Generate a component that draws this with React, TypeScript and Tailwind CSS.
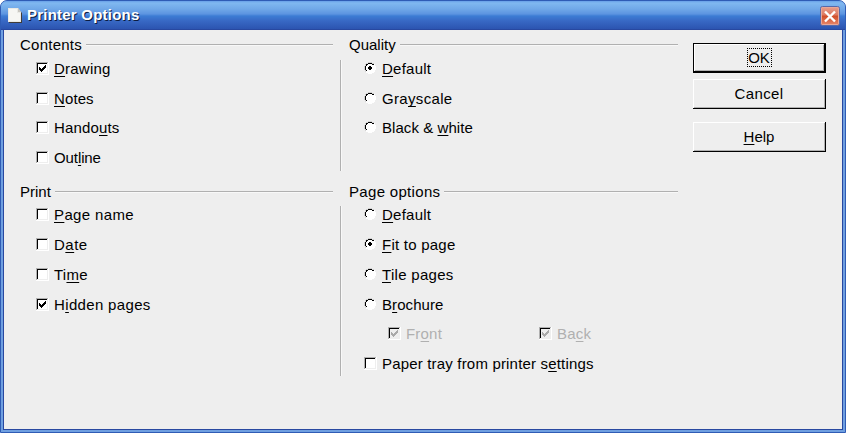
import React from "react";

/** Renders a label; the character following "~" is the underlined mnemonic. */
function Mnemonic({ text }: { text: string }) {
  const i = text.indexOf("~");
  if (i < 0) return <>{text}</>;
  return (
    <>
      {text.slice(0, i)}
      <span className="underline decoration-1 underline-offset-2 [text-decoration-skip-ink:none]">{text[i + 1]}</span>
      {text.slice(i + 2)}
    </>
  );
}

function CheckMark({ checked, disabled }: { checked?: boolean; disabled?: boolean }) {
  return (
    <svg width="13" height="13" viewBox="0 0 13 13" shapeRendering="crispEdges" className="block shrink-0">
      <rect width="13" height="13" fill="#fff" />
      <path d="M0 0H12V1H1V12H0Z" fill="#b0b0b0" />
      <path d="M1 1H11V2H2V11H1Z" fill="#000" />
      <path d="M11 1h1v11H1v-1h10z" fill="#eeeeee" />
      <rect x="2" y="2" width="9" height="9" fill={disabled ? "#eeeeee" : "#fff"} />
      {checked && (
        <path
          d="M3 5h1v1h1v1h1v-1h1v-1h1v-1h1v-1h1v3h-1v1h-1v1h-1v1h-1v1h-1v-1h-1v-1h-1z"
          fill={disabled ? "#a9a9a9" : "#000"}
        />
      )}
    </svg>
  );
}

function RadioMark({ checked }: { checked?: boolean }) {
  return (
    <svg width="12" height="12" viewBox="0 0 12 12" shapeRendering="crispEdges" className="block shrink-0">
      <path d="M4 1h4v1h2v2h1v4h-1v2h-2v1H4v-1H2V8H1V4h1V2h2z" fill="#fff" />
      <path d="M4 0h4v1H4zM2 1h2v1H2zM8 1h2v1H8zM1 2h1v2H1zM0 4h1v4H0zM1 8h1v2H1z" fill="#d2d2d2" />
      <path d="M10 2h1v2h-1zM11 4h1v4h-1zM10 8h1v2h-1zM8 10h2v1H8zM4 11h4v1H4zM2 10h2v1H2z" fill="#fff" />
      <path d="M4 1h4v1H4zM2 2h2v1H2zM8 2h2v1H8zM2 3h1v1H2zM1 4h1v4H1zM2 8h1v1H2z" fill="#000" />
      {checked && <path d="M5 4h2v1h1v2H7v1H5V7H4V5h1z" fill="#000" />}
    </svg>
  );
}

type Item = { label: string; h: string; t?: string; checked?: boolean; disabled?: boolean; radio?: boolean; w?: string };

function Option({ label, h, t = "", checked, disabled, radio, w = "" }: Item) {
  return (
    <div className={`flex items-start ${h} ${w}`}>
      <div className="flex w-[18px] pt-[3px]">
        {radio ? <RadioMark checked={checked} /> : <CheckMark checked={checked} disabled={disabled} />}
      </div>
      <span className={`whitespace-nowrap leading-[19px] ${t} ${disabled ? "text-[#b0b0b0]" : ""}`}>
        <Mnemonic text={label} />
      </span>
    </div>
  );
}

function GroupHead({ title, width, t = "" }: { title: string; width: string; t?: string }) {
  return (
    <div className={`flex h-5 items-start gap-1 ${width}`}>
      <span className={`leading-5 ${t}`}>{title}</span>
      <div className="mt-[9px] h-[2px] flex-1 border-b border-t border-b-[#f8f8f8] border-t-[#b0b0b0]" />
    </div>
  );
}

function Divider({ className }: { className: string }) {
  return <div className={`w-[2px] border-l border-r border-l-[#b0b0b0] border-r-[#f8f8f8] ${className}`} />;
}

const contents: Item[] = [
  { label: "~Drawing", h: "h-[30px]", t: "tracking-[0.22px]", checked: true },
  { label: "~Notes", h: "h-[29px]", t: "tracking-[0.1px]" },
  { label: "Hando~uts", h: "h-[30px]", t: "tracking-[0.16px]" },
  { label: "Out~line", h: "h-[24px]", t: "tracking-[-0.1px]" },
];
const quality: Item[] = [
  { label: "~Default", h: "h-[30px]", t: "tracking-[0.25px]", checked: true, radio: true },
  { label: "Gra~yscale", h: "h-[29px]", t: "tracking-[0.33px]", radio: true },
  { label: "Black & ~white", h: "h-[30px]", t: "tracking-[0.06px]", radio: true },
];
const print: Item[] = [
  { label: "~Page name", h: "h-[30px]", t: "tracking-[0.36px]" },
  { label: "D~ate", h: "h-[30px]", t: "tracking-[0.5px]" },
  { label: "Ti~me", h: "h-[30px]", t: "tracking-[0.25px]" },
  { label: "H~idden pages", h: "h-[30px]", t: "tracking-[0.34px]", checked: true },
];
const pageOptions: Item[] = [
  { label: "~Default", h: "h-[30px]", t: "tracking-[0.25px]", radio: true },
  { label: "~Fit to page", h: "h-[30px]", t: "tracking-[0.24px]", checked: true, radio: true },
  { label: "~Tile pages", h: "h-[30px]", t: "tracking-[0.3px]", radio: true },
  { label: "B~rochure", h: "h-[29px]", t: "tracking-[0.08px]", radio: true },
];

function DialogButton({ children, focused, className = "" }: { children: React.ReactNode; focused?: boolean; className?: string }) {
  return (
    <button
      className={`flex w-[133px] items-center justify-center border-black bg-[#eeeeee] shadow-[inset_1px_1px_#fff,inset_-1px_-1px_#b0b0b0] ${
        focused ? "border-b-2 border-l border-r-2 border-t" : "border-b border-r pt-[2px]"
      } ${className}`}
    >
      {children}
    </button>
  );
}

export default function App() {
  return (
    <div className="h-[433px] w-[846px] bg-white font-['Liberation_Sans',Arial,sans-serif] text-[15px] text-black">
      <div className="flex h-full flex-col overflow-hidden rounded-t-[7px] border border-[#2f5cb5] bg-[#6f9fe0]">
        <div className="flex h-[29px] shrink-0 items-start border-b border-[#2848a0] bg-[linear-gradient(#68a0e8_0px,#80b8f0_2px,#70a8e8_8px,#5c94e0_13px,#3c7cd4_15px,#3868c4_20px,#2c54b0_28px)] pl-[7px] pr-[5px]">
          <svg width="15" height="16" viewBox="0 0 15 16" className="mt-[7px]">
            <path d="M1 1h9l4 4v10H1z" fill="#403c38" />
            <path d="M0 0h10l3 4v10H0z" fill="#e9e9e5" />
            <path d="M1 1h8v4h3v8H1z" fill="#f6f6f3" />
            <path d="M10 0v4h3z" fill="#c8c6c0" />
          </svg>
          <span className="ml-1 mt-[4px] text-[15px] font-bold leading-[19px] tracking-[0.22px] text-white [text-shadow:1px_1px_#0c1c40]">
            Printer Options
          </span>
          <svg width="20" height="20" viewBox="0 0 20 20" className="ml-auto mt-[5px]">
            <defs>
              <linearGradient id="close" x1="0" y1="0" x2="0" y2="1">
                <stop offset="0" stopColor="#e8a090" />
                <stop offset=".45" stopColor="#dd7860" />
                <stop offset=".5" stopColor="#d04c28" />
                <stop offset="1" stopColor="#e88c70" />
              </linearGradient>
            </defs>
            <rect x=".5" y=".5" width="19" height="19" rx="2" fill="url(#close)" stroke="#5868a8" />
            <rect x="1.5" y="1.5" width="17" height="17" rx="1" fill="none" stroke="#e8a898" />
            <path d="M5 5.5l10 10M15 5.5L5 15.5" stroke="#fff" strokeWidth="2.4" />
          </svg>
        </div>
        <div className="mx-[2px] mb-[2px] flex flex-1 border-x border-b border-[#2848a0] bg-[#eeeeee]">
          <div className="w-[320px] pl-4 pt-[5px]">
            <GroupHead title="Contents" width="w-[313px]" t="tracking-[0.25px]" />
            <div className="h-[127px] pl-4 pt-1">
              {contents.map((o) => <Option key={o.label} {...o} />)}
            </div>
            <GroupHead title="Print" width="w-[313px]" />
            <div className="pl-4 pt-[3px]">
              {print.map((o) => <Option key={o.label} {...o} />)}
            </div>
          </div>
          <div className="ml-4 w-[2px] pt-[30px]">
            <Divider className="h-[111px]" />
            <Divider className="mt-[35px] h-[170px]" />
          </div>
          <div className="ml-[7px] w-[329px] pt-[5px]">
            <GroupHead title="Quality" width="w-[329px]" />
            <div className="h-[127px] pl-[15px] pt-1">
              {quality.map((o) => <Option key={o.label} {...o} />)}
            </div>
            <GroupHead title="Page options" width="w-[329px]" t="tracking-[0.32px]" />
            <div className="pl-[15px] pt-[3px]">
              {pageOptions.map((o) => <Option key={o.label} {...o} />)}
              <div className="flex pl-6">
                <Option label="Fr~ont" h="h-[30px]" w="w-[151px]" t="tracking-[0.2px]" checked disabled />
                <Option label="Ba~ck" h="h-[30px]" t="tracking-[0.2px]" checked disabled />
              </div>
              <Option label="Paper tray from printer s~ettings" h="h-[30px]" t="tracking-[0.18px]" />
            </div>
          </div>
          <div className="ml-[15px] pt-[13px]">
            <DialogButton focused className="h-[30px]">
              <span className="w-[25px] border border-dotted border-black text-center leading-[17px]">OK</span>
            </DialogButton>
            <DialogButton className="mt-[6px] h-[30px]"><span className="tracking-[0.35px]">Cancel</span></DialogButton>
            <DialogButton className="mt-[13px] h-[30px]"><span><Mnemonic text="~Help" /></span></DialogButton>
          </div>
        </div>
      </div>
    </div>
  );
}
